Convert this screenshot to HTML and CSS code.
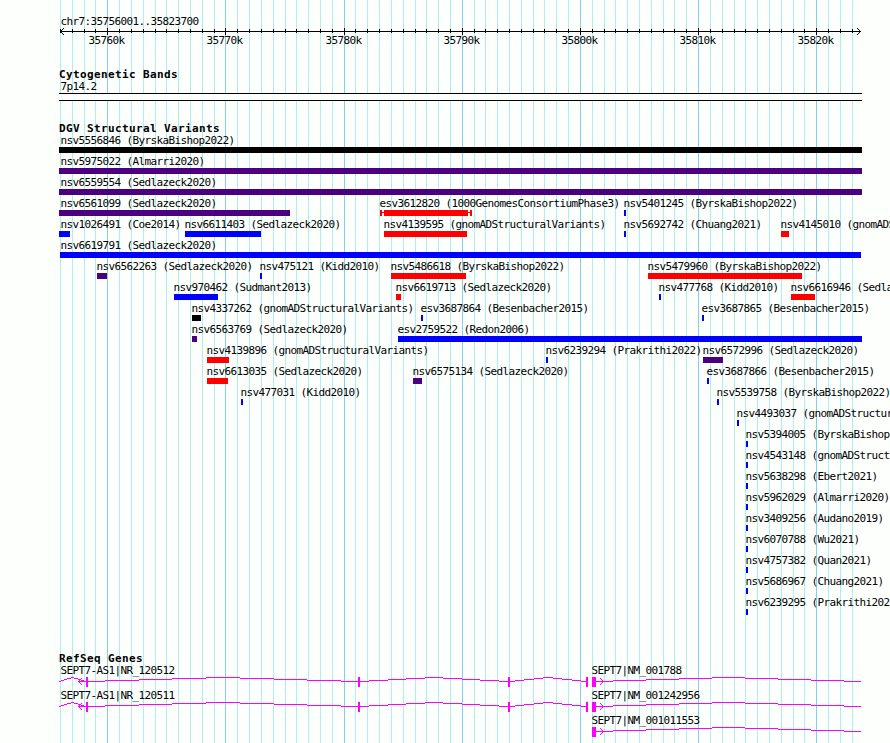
FILE: index.html
```
<!DOCTYPE html>
<html>
<head>
<meta charset="utf-8">
<title>chr7:35756001..35823700</title>
<link rel="stylesheet" href="styles.css">
</head>

<body>
<div id="browser">
	<svg id="grid" width="890" height="743"></svg>
	<svg id="ruler" class="track" width="890" height="68"></svg>
	<h2>Cytogenetic Bands</h2>
	<svg id="bands" class="track" width="890" height="42">
		<text x="60.5" y="10">7p14.2</text>
		<rect class="band" x="59" y="13" width="803" height="8"/>
		<rect x="59" y="13" width="803" height="1"/>
		<rect x="59" y="20" width="803" height="1"/>
	</svg>
	<h2>DGV Structural Variants</h2>
	<svg id="variants" class="track" width="890" height="518"></svg>
	<h2>RefSeq Genes</h2>
	<svg id="genes" class="track" width="890" height="79"></svg>
</div>
<script src="browser.js"></script>
</body>
</html>
```
FILE: styles.css
```
body{
	margin:0;
	background:#fdfffc;
	color:#000;
	overflow:hidden;
}
#browser{
	width:890px;
	height:743px;
	position:relative;
	overflow:hidden;
}
#grid{
	position:absolute;
	left:0;
	top:0;
	shape-rendering:crispEdges;
}
h2{
	position:relative;
	margin:0;
	padding-left:59px;
	height:12px;
	font:bold 11px/14px "DejaVu Sans Mono", monospace;
	letter-spacing:.38px;
	white-space:pre;
}
.track{
	display:block;
	position:relative;
	font:11px "DejaVu Sans Mono", monospace;
	letter-spacing:-.622px;
	shape-rendering:crispEdges;
}
.minor{
	fill:#afeeee;
}
.major{
	fill:#87ceeb;
}
.band{
	fill:#fdfffc;
}
.arrow{
	fill:none;
	stroke:#000;
}
.black{
	fill:#000;
}
.indigo{
	fill:#4b0082;
}
.blue{
	fill:#00f;
}
.red{
	fill:#f00;
}
.exon{
	fill:#f0f;
}
.strand{
	fill:none;
	stroke:#f0f;
}
```
FILE: browser.js
```
var START = 35756;
var END = 35823;
var SCALE = 800/67.7;

function get(id){
	return document.getElementById(id);
}
function rect(cls,x,y,w,h){
	return '<rect class="' + cls + '" x="' + x + '" y="' + y + '" width="' + w + '" height="' + h + '"/>';
}
function text(x,y,str){
	return '<text x="' + (x + .5) + '" y="' + y + '">' + str + '</text>';
}
function path(cls,d){
	return '<path class="' + cls + '" d="' + d + '"/>';
}

// grid and ruler
var grid = '';
var ruler = text(60,25,'chr7:35756001..35823700') + rect('black',60,31,801,1);
ruler += path('arrow','M64 28 L60.5 31.5 L64 35 M857 28 L860.5 31.5 L857 35');
for(var k = START; k <= END; k++){
	var x = Math.round(60 + (k - START)*SCALE);
	var big = k % 10 == 0;
	grid += rect(big ? 'major' : 'minor',x,0,1,743);
	ruler += big ? rect('black',x,28,1,7) : rect('black',x,29,1,4);
	if(big){
		ruler += text(x - 19,44,k + 'k');
	}
}
get('grid').innerHTML = grid;
get('ruler').innerHTML = ruler;

// one array for each row: name, left, right, colour
var rows = [
	[['nsv5556846 (ByrskaBishop2022)',59,862,'black']],
	[['nsv5975022 (Almarri2020)',59,862,'indigo']],
	[['nsv6559554 (Sedlazeck2020)',59,862,'indigo']],
	[['nsv6561099 (Sedlazeck2020)',59,290,'indigo'],['esv3612820 (1000GenomesConsortiumPhase3)',384,468,'red',380,472],['nsv5401245 (ByrskaBishop2022)',624,626,'blue']],
	[['nsv1026491 (Coe2014)',59,70,'blue'],['nsv6611403 (Sedlazeck2020)',185,261,'blue'],['nsv4139595 (gnomADStructuralVariants)',384,467,'red'],['nsv5692742 (Chuang2021)',624,626,'blue'],['nsv4145010 (gnomADStructuralVariants)',781,789,'red']],
	[['nsv6619791 (Sedlazeck2020)',60,861,'blue']],
	[['nsv6562263 (Sedlazeck2020)',97,107,'indigo'],['nsv475121 (Kidd2010)',260,262,'blue'],['nsv5486618 (ByrskaBishop2022)',391,466,'red'],['nsv5479960 (ByrskaBishop2022)',648,802,'red']],
	[['nsv970462 (Sudmant2013)',174,218,'blue'],['nsv6619713 (Sedlazeck2020)',396,401,'red'],['nsv477768 (Kidd2010)',659,661,'blue'],['nsv6616946 (Sedlazeck2020)',791,815,'red']],
	[['nsv4337262 (gnomADStructuralVariants)',192,201,'black'],['esv3687864 (Besenbacher2015)',421,423,'blue'],['esv3687865 (Besenbacher2015)',702,704,'blue']],
	[['nsv6563769 (Sedlazeck2020)',192,197,'indigo'],['esv2759522 (Redon2006)',398,862,'blue']],
	[['nsv4139896 (gnomADStructuralVariants)',207,229,'red'],['nsv6239294 (Prakrithi2022)',546,548,'blue'],['nsv6572996 (Sedlazeck2020)',703,723,'indigo']],
	[['nsv6613035 (Sedlazeck2020)',207,228,'red'],['nsv6575134 (Sedlazeck2020)',413,422,'indigo'],['esv3687866 (Besenbacher2015)',707,709,'blue']],
	[['nsv477031 (Kidd2010)',241,243,'blue'],['nsv5539758 (ByrskaBishop2022)',717,719,'blue']],
	[['nsv4493037 (gnomADStructuralVariants)',737,739,'blue']],
	[['nsv5394005 (ByrskaBishop2022)',746,748,'blue']],
	[['nsv4543148 (gnomADStructuralVariants)',746,748,'blue']],
	[['nsv5638298 (Ebert2021)',746,748,'blue']],
	[['nsv5962029 (Almarri2020)',746,748,'blue']],
	[['nsv3409256 (Audano2019)',746,748,'blue']],
	[['nsv6070788 (Wu2021)',746,748,'blue']],
	[['nsv4757382 (Quan2021)',746,748,'blue']],
	[['nsv5686967 (Chuang2021)',746,748,'blue']],
	[['nsv6239295 (Prakrithi2022)',746,748,'blue']]
];
var out = '';
for(var i = 0; i < rows.length; i++){
	for(var n = 0; n < rows[i].length; n++){
		var f = rows[i][n];
		var y = 13 + i*21;
		var left = f[4] || f[1];
		out += text(Math.max(60,left - 1),y - 3,f[0]);
		out += rect(f[3],f[1],y,f[2] - f[1],6);
		// uncertain ends
		if(f[4]){
			out += rect(f[3],f[4],y,2,6) + rect(f[3],f[5] - 2,y,2,6);
			out += rect(f[3],f[4],y + 2,f[5] - f[4],1);
		}
	}
}
get('variants').innerHTML = out;

// intron: climbs 4px to the middle and back, one pixel a step
function hat(x1,x2,y){
	var s = '';
	var from = x1;
	for(var j = 0; j <= 8; j++){
		var to = j == 8 ? x2 : Math.round(x1 + (x2 - x1)*(2*j + 1)/16);
		s += rect('exon',from,y + Math.abs(4 - j),to - from,1);
		from = to;
	}
	return s;
}
function septAs(y,name){
	var m = y + 4.5;
	var s = text(60,y - 3,name);
	s += hat(59,86,y) + hat(88,358,y) + hat(360,508,y) + hat(510,586,y);
	s += rect('exon',78,y + 4,8,1);
	s += path('strand','M82 ' + (m - 3.5) + ' L78.5 ' + m + ' L82 ' + (m + 3.5));
	s += rect('exon',86,y,2,10) + rect('exon',358,y,2,10) + rect('exon',508,y,2,10) + rect('exon',586,y,2,10);
	return s;
}
function sept(y,name){
	var m = y + 4.5;
	var s = text(591,y - 3,name) + rect('exon',592,y,4,10);
	s += hat(596,861,y);
	s += path('strand','M600 ' + (m - 3.5) + ' L603.5 ' + m + ' L600 ' + (m + 3.5));
	return s;
}
get('genes').innerHTML = septAs(13,'SEPT7-AS1|NR_120512') + sept(13,'SEPT7|NM_001788')
	+ septAs(38,'SEPT7-AS1|NR_120511') + sept(38,'SEPT7|NM_001242956')
	+ sept(63,'SEPT7|NM_001011553');
```
